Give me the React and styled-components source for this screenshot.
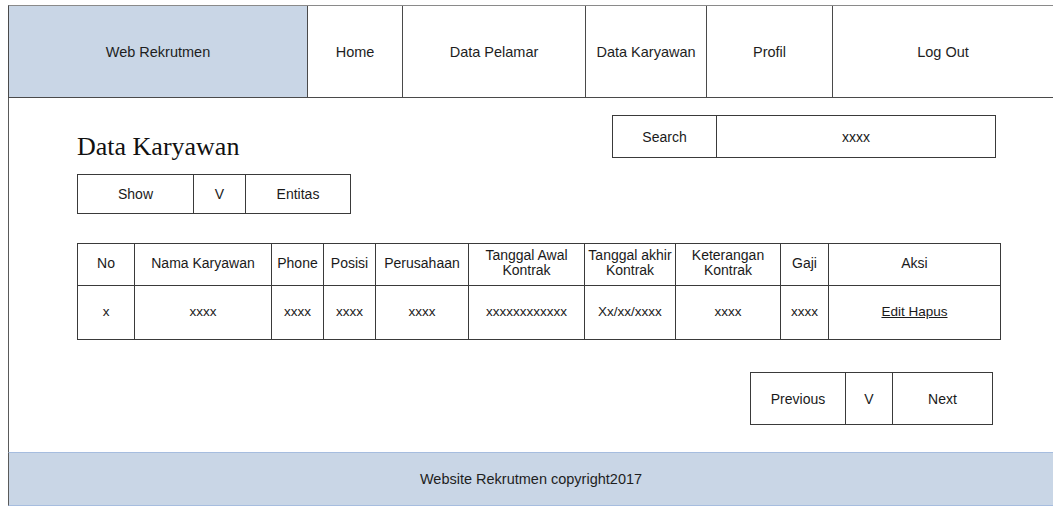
import React from "react";
import styled, { createGlobalStyle } from "styled-components";

const navItems = [
  { label: "Web Rekrutmen", width: 299, brand: true },
  { label: "Home", width: 95 },
  { label: "Data Pelamar", width: 183 },
  { label: "Data Karyawan", width: 121 },
  { label: "Profil", width: 126 },
  { label: "Log Out" },
];

const columns = [
  { head: ["No"], width: 57 },
  { head: ["Nama Karyawan"], width: 137 },
  { head: ["Phone"], width: 52 },
  { head: ["Posisi"], width: 52 },
  { head: ["Perusahaan"], width: 93 },
  { head: ["Tanggal Awal", "Kontrak"], width: 116 },
  { head: ["Tanggal akhir", "Kontrak"], width: 91 },
  { head: ["Keterangan", "Kontrak"], width: 105 },
  { head: ["Gaji"], width: 48 },
  { head: ["Aksi"], width: 172 },
];

const row = ["x", "xxxx", "xxxx", "xxxx", "xxxx", "xxxxxxxxxxxx", "Xx/xx/xxxx", "xxxx", "xxxx"];

const App = () => {
  return (
    <>
      <GlobalStyle />
      <Page>
        <Header>
          {navItems.map((item) => (
            <NavCell key={item.label} $width={item.width} $brand={item.brand}>
              {item.label}
            </NavCell>
          ))}
        </Header>
        <Main>
          <TopRow>
            <TitleBlock>
              <Title>Data Karyawan</Title>
              <BoxGroup $height={40}>
                <BoxCell $width={116}>Show</BoxCell>
                <BoxCell $width={52}>V</BoxCell>
                <BoxCell $width={104}>Entitas</BoxCell>
              </BoxGroup>
            </TitleBlock>
            <BoxGroup $height={43}>
              <BoxCell $width={104}>Search</BoxCell>
              <BoxCell $width={278}>xxxx</BoxCell>
            </BoxGroup>
          </TopRow>

          <Table $cols={columns.map((c) => c.width + "px").join(" ")}>
            {columns.map((c) => (
              <HeadCell key={c.head.join(" ")}>
                {c.head.map((line) => (
                  <span key={line}>{line}</span>
                ))}
              </HeadCell>
            ))}
            {row.map((value, i) => (
              <BodyCell key={i}>{value}</BodyCell>
            ))}
            <BodyCell>
              <ActionLink href="#">Edit Hapus</ActionLink>
            </BodyCell>
          </Table>

          <Pager $height={53}>
            <BoxCell $width={95}>Previous</BoxCell>
            <BoxCell $width={47}>V</BoxCell>
            <BoxCell $width={99}>Next</BoxCell>
          </Pager>
        </Main>
        <Footer>Website Rekrutmen copyright2017</Footer>
      </Page>
    </>
  );
};

const GlobalStyle = createGlobalStyle`
  * {
    box-sizing: border-box;
  }
  body {
    margin: 0;
    background: #ffffff;
    font-family: "Liberation Sans", Arial, sans-serif;
    color: #1a1a1a;
  }
`;

const Page = styled.div`
  width: 1053px;
  padding: 5px 0 0 8px;
`;

const Header = styled.header`
  display: flex;
  height: 93px;
  border-top: 1px solid #8a8a8a;
  border-bottom: 1px solid #4a4a4a;
  border-left: 1px solid #4a4a4a;
`;

const NavCell = styled.div`
  display: flex;
  align-items: center;
  justify-content: center;
  flex: ${(p) => (p.$width ? `0 0 ${p.$width}px` : "1")};
  background: ${(p) => (p.$brand ? "#c9d6e6" : "#ffffff")};
  border-right: 1px solid #4a4a4a;
  font-size: 14.5px;
  color: #1e1e1e;

  &:last-child {
    border-right: none;
  }
`;

const Main = styled.main`
  display: flex;
  flex-direction: column;
  height: 354px;
  border-left: 1px solid #5a5a5a;
`;

const TopRow = styled.div`
  display: flex;
  justify-content: space-between;
  align-items: flex-start;
  padding: 17px 57px 0 68px;
`;

const TitleBlock = styled.div`
  display: flex;
  flex-direction: column;
  gap: 12px;
  padding-top: 17px;
`;

const Title = styled.h1`
  margin: 0;
  font-family: "Liberation Serif", "Times New Roman", serif;
  font-weight: normal;
  font-size: 26px;
  line-height: 30px;
  color: #111111;
`;

const BoxGroup = styled.div`
  display: flex;
  height: ${(p) => p.$height}px;
  border: 1px solid #3a3a3a;
`;

const BoxCell = styled.div`
  display: flex;
  align-items: center;
  justify-content: center;
  flex: 0 0 ${(p) => p.$width}px;
  border-right: 1px solid #3a3a3a;
  font-size: 14px;

  &:last-child {
    border-right: none;
  }
`;

const Table = styled.div`
  display: grid;
  grid-template-columns: ${(p) => p.$cols};
  grid-template-rows: 42px 54px;
  width: 924px;
  margin: 29px 0 0 68px;
  border-top: 1px solid #3a3a3a;
  border-left: 1px solid #3a3a3a;
`;

const Cell = styled.div`
  display: flex;
  flex-direction: column;
  align-items: center;
  justify-content: center;
  border-right: 1px solid #3a3a3a;
  border-bottom: 1px solid #3a3a3a;
  text-align: center;
`;

const HeadCell = styled(Cell)`
  font-size: 14px;
  line-height: 15px;
  padding-bottom: 3px;
`;

const BodyCell = styled(Cell)`
  font-size: 13.5px;
  padding-bottom: 2px;
`;

const ActionLink = styled.a`
  color: #1a1a1a;
  text-decoration: underline;
`;

const Pager = styled(BoxGroup)`
  align-self: flex-end;
  margin: 32px 60px 0 0;
`;

const Footer = styled.footer`
  display: flex;
  align-items: center;
  justify-content: center;
  height: 54px;
  background: #c9d6e6;
  border-top: 1px solid #a6bddf;
  border-bottom: 1px solid #a6bddf;
  border-left: 1px solid #5a5a5a;
  font-size: 14.5px;
  color: #1e1e1e;
`;

export default App;
